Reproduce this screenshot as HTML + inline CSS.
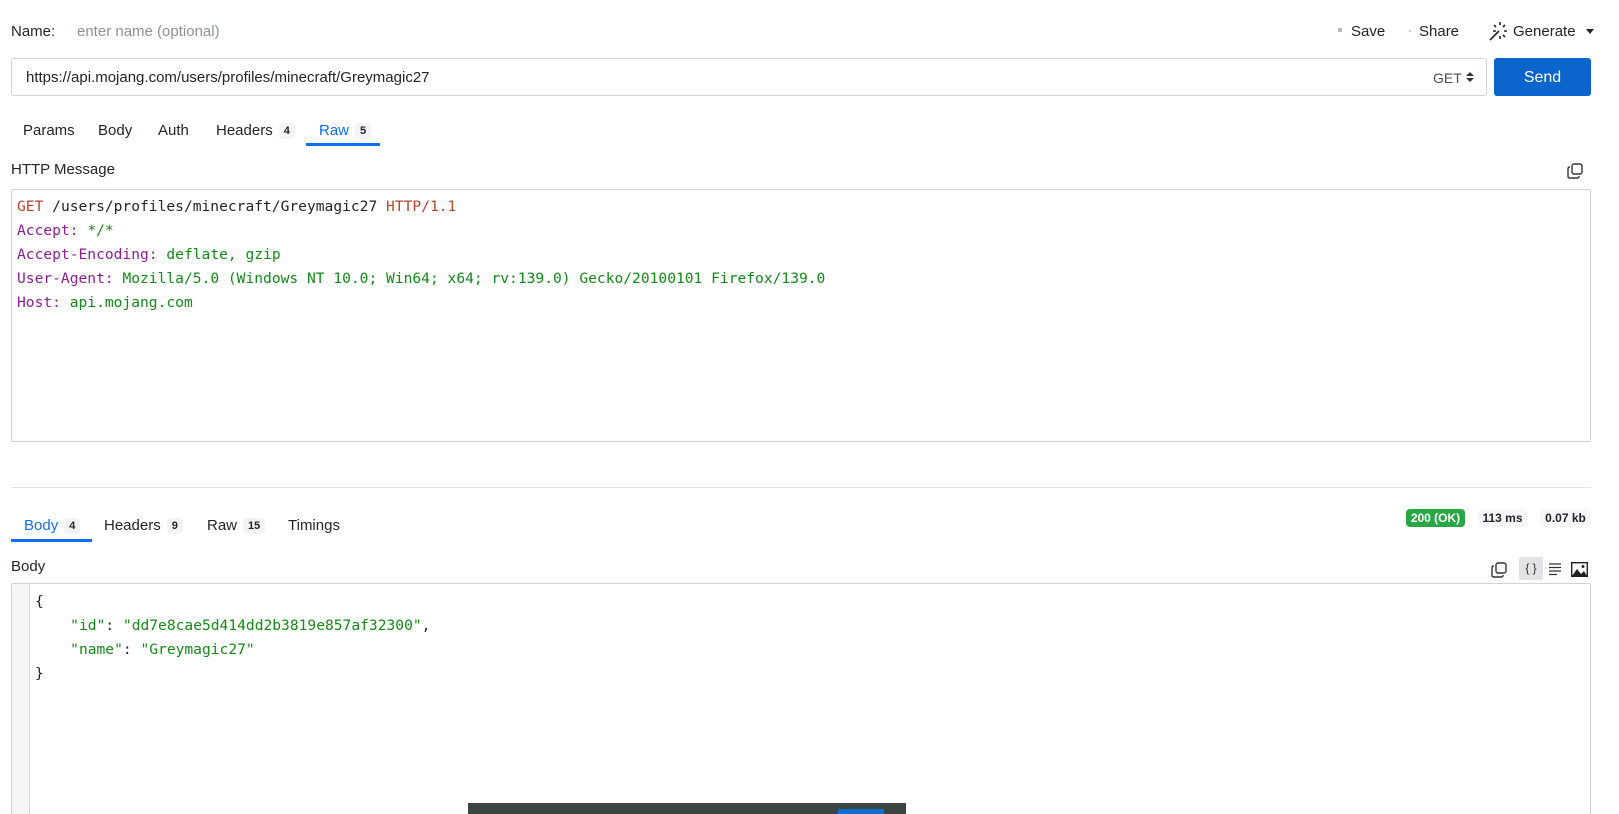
<!DOCTYPE html>
<html style="overflow:hidden;height:814px"><head><meta charset="utf-8"><style>
*{margin:0;padding:0;box-sizing:border-box}
body{width:1619px;height:814px;overflow:hidden;background:#fff;font-family:"Liberation Sans",sans-serif;font-size:15px;color:#212529;position:relative}
.a{position:absolute;white-space:nowrap}
.mono{font-family:"DejaVu Sans Mono","Liberation Mono",monospace;font-size:14.6px}
.badge{display:inline-block;background:#f1f3f5;border-radius:4px;font-size:11px;font-weight:bold;padding:2px 5px;margin-left:6px;vertical-align:1px;color:#212529}
.box{position:absolute;border:1px solid #ced4da;border-radius:3px;background:#fff}
.pill{position:absolute;height:18px;border-radius:4px;font-size:12px;font-weight:bold;line-height:18px;text-align:center}
.r{color:#b5442e}.p{color:#8b1e97}.g{color:#138a17}.k{color:#212529}
</style></head><body>
<div class="a" style="left:11px;top:23px">Name:</div>
<div class="a" style="left:77px;top:23px;color:#8a939b">enter name (optional)</div>
<div class="a" style="left:1338px;top:28px;width:4px;height:4px;background:#bbb"></div>
<div class="a" style="left:1351px;top:23px">Save</div>
<div class="a" style="left:1409px;top:30px;width:2px;height:2px;background:#ccc"></div>
<div class="a" style="left:1419px;top:23px">Share</div>
<svg class="a" style="left:1488px;top:20px" width="22" height="22" viewBox="0 0 22 22" stroke="#212529" stroke-width="1.6" fill="none"><path d="M2 20L11 11M12 2v3M12 16v3M17 5l-2 2M19 11h-3M17 17l-2-2M5 11h3M6 5l2 2"/></svg>
<div class="a" style="left:1513px;top:23px">Generate</div>
<div class="a" style="left:1586px;top:29px;border:4px solid transparent;border-top:5px solid #212529"></div>

<div class="box" style="left:11px;top:58px;width:1476px;height:38px"></div>
<div class="a" style="left:26px;top:69px">https://api.mojang.com/users/profiles/minecraft/Greymagic27</div>
<div class="a" style="left:1433px;top:70px;color:#495057;font-size:14px">GET</div>
<div class="a" style="left:1466px;top:72px;border:4px solid transparent;border-bottom:4px solid #333;border-top:0"></div>
<div class="a" style="left:1466px;top:78px;border:4px solid transparent;border-top:4px solid #333;border-bottom:0"></div>
<div class="a" style="left:1494px;top:58px;width:97px;height:38px;background:#0a66cc;border-radius:3px;color:#fff;text-align:center;line-height:40px;font-size:16px">Send</div>

<div class="a" style="left:23px;top:122px">Params</div>
<div class="a" style="left:98px;top:122px">Body</div>
<div class="a" style="left:158px;top:122px">Auth</div>
<div class="a" style="left:216px;top:122px">Headers<span class="badge">4</span></div>
<div class="a" style="left:319px;top:122px;color:#0d6efd">Raw<span class="badge">5</span></div>
<div class="a" style="left:306px;top:143px;width:74px;height:3px;background:#0d6efd"></div>

<div class="a" style="left:11px;top:161px">HTTP Message</div>
<svg class="a" style="left:1566px;top:162px" width="18" height="18" viewBox="0 0 18 18" fill="none" stroke="#333" stroke-width="1.4"><rect x="6" y="2" width="10" height="10" rx="2"/><path d="M4 5H3.5A1.5 1.5 0 0 0 2 6.5v8A1.5 1.5 0 0 0 3.5 16h8a1.5 1.5 0 0 0 1.5-1.5V14"/></svg>
<div class="box" style="left:11px;top:189px;width:1580px;height:253px;border-radius:2px"></div>
<div class="a mono" style="left:17px;top:195px;line-height:24px">
<div><span class="r">GET</span> <span class="k">/users/profiles/minecraft/Greymagic27</span> <span class="r">HTTP/1.1</span></div>
<div><span class="p">Accept:</span> <span class="g">*/*</span></div>
<div><span class="p">Accept-Encoding:</span> <span class="g">deflate, gzip</span></div>
<div><span class="p">User-Agent:</span> <span class="g">Mozilla/5.0 (Windows NT 10.0; Win64; x64; rv:139.0) Gecko/20100101 Firefox/139.0</span></div>
<div><span class="p">Host:</span> <span class="g">api.mojang.com</span></div>
</div>

<div class="a" style="left:11px;top:487px;width:1580px;height:1px;background:#e3e5e8"></div>

<div class="a" style="left:24px;top:517px;color:#0d6efd">Body<span class="badge">4</span></div>
<div class="a" style="left:104px;top:517px">Headers<span class="badge">9</span></div>
<div class="a" style="left:207px;top:517px">Raw<span class="badge">15</span></div>
<div class="a" style="left:288px;top:517px">Timings</div>
<div class="a" style="left:11px;top:539px;width:81px;height:3px;background:#0d6efd"></div>

<div class="pill" style="left:1406px;top:509px;width:59px;background:#28a745;color:#fff">200 (OK)</div>
<div class="pill" style="left:1478px;top:509px;width:49px;background:#f6f7f9">113 ms</div>
<div class="pill" style="left:1540px;top:509px;width:51px;background:#f6f7f9">0.07 kb</div>

<div class="a" style="left:11px;top:558px">Body</div>
<svg class="a" style="left:1490px;top:561px" width="18" height="18" viewBox="0 0 18 18" fill="none" stroke="#333" stroke-width="1.4"><rect x="6" y="2" width="10" height="10" rx="2"/><path d="M4 5H3.5A1.5 1.5 0 0 0 2 6.5v8A1.5 1.5 0 0 0 3.5 16h8a1.5 1.5 0 0 0 1.5-1.5V14"/></svg>
<div class="a" style="left:1519px;top:557px;width:24px;height:23px;background:#e2e3e5;border-radius:2px;font-size:12px;text-align:center;line-height:23px;color:#333">{ }</div>
<svg class="a" style="left:1548px;top:562px" width="14" height="14" viewBox="0 0 14 14" stroke="#333" stroke-width="1.2"><path d="M1 2h12M1 5.5h12M1 9h12M1 12.5h8"/></svg>
<svg class="a" style="left:1571px;top:562px" width="17" height="15" viewBox="0 0 17 15"><rect x="0.7" y="0.7" width="15.6" height="13.6" fill="none" stroke="#222" stroke-width="1.4"/><path d="M1 14L6 7l4 5 3-3 3 5z" fill="#222"/><circle cx="12" cy="4.5" r="1.5" fill="#222"/></svg>

<div class="box" style="left:11px;top:583px;width:1580px;height:231px;border-radius:2px 2px 0 0;border-bottom:0"></div>
<div class="a" style="left:12px;top:584px;width:18px;height:230px;background:#f6f6f6;border-right:1px solid #ddd"></div>
<div class="a mono" style="left:35px;top:590px;line-height:24px">
<div class="k">{</div>
<div>&nbsp;&nbsp;&nbsp;&nbsp;<span class="g">"id"</span><span class="k">:</span> <span class="g">"dd7e8cae5d414dd2b3819e857af32300"</span><span class="k">,</span></div>
<div>&nbsp;&nbsp;&nbsp;&nbsp;<span class="g">"name"</span><span class="k">:</span> <span class="g">"Greymagic27"</span></div>
<div class="k">}</div>
</div>

<div class="a" style="left:468px;top:803px;width:438px;height:11px;background:#3d4444"></div>
<div class="a" style="left:838px;top:809px;width:46px;height:5px;background:#0a6fd0"></div>
</body></html>
